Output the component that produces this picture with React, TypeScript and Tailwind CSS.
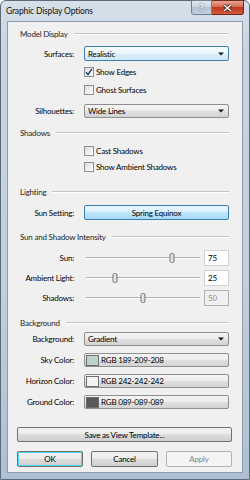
import React from "react";

const FONT = "font-['Lato',sans-serif]";

function Header({ text }: { text: string }) {
  return (
    <div className="flex h-[12px] items-center">
      <span className="whitespace-nowrap text-[#1e1e1e]">{text}</span>
      <div className="ml-[6px] h-[2px] flex-1 border-b border-t border-b-white border-t-[#c4c4c4]" />
    </div>
  );
}

function Row({ label, children, mt, h }: { label: string; children: React.ReactNode; mt: string; h: string }) {
  return (
    <div className={`flex items-center ${mt} ${h}`}>
      <div className="w-[54px] whitespace-nowrap text-right">{label}</div>
      <div className="ml-[10px] h-full flex-1">{children}</div>
    </div>
  );
}

function Arrow() {
  return (
    <svg width="6" height="4" viewBox="0 0 6 4">
      <path d="M0 0.5H6L3 3.5Z" fill="#1a1a1a" />
    </svg>
  );
}

function Combo({ value, focused }: { value: string; focused?: boolean }) {
  return (
    <div
      className={`flex h-full items-center justify-between rounded-[2px] border pl-[3px] pr-[4px] ${
        focused
          ? "border-[#3c7fb1] bg-[linear-gradient(#f6fbfe_0%,#eaf5fc_50%,#dbeef9_50%,#cfe8f7_100%)]"
          : "border-[#8e8f8f] bg-[linear-gradient(#f4f4f4_0%,#ececec_50%,#e0e0e0_50%,#d3d3d3_100%)]"
      }`}
    >
      <span className="whitespace-nowrap">{value}</span>
      <Arrow />
    </div>
  );
}

function Check({ label, checked, mt }: { label: string; checked?: boolean; mt: string }) {
  return (
    <div className={`flex h-[12px] items-center ${mt}`}>
      <div className="w-[64px]" />
      <div className="flex h-[10px] w-[10px] items-center justify-center border border-[#8e8f8f] bg-[linear-gradient(135deg,#dcdcdc,#ffffff)]">
        {checked && (
          <svg width="8" height="8" viewBox="0 0 8 8">
            <path d="M1 4.2L3 6.5L7 0.8" fill="none" stroke="#2a3f7a" strokeWidth="1.4" />
          </svg>
        )}
      </div>
      <span className="ml-[2px] whitespace-nowrap">{label}</span>
    </div>
  );
}

function Slider({ pct, value, disabled }: { pct: number; value: string; disabled?: boolean }) {
  return (
    <div className="flex h-full items-center">
      <div className="relative ml-[2px] h-full w-[114px]">
        <div className="absolute left-0 right-0 top-[7px] h-[2px] border-b border-t border-b-white border-t-[#b4b4b4]" />
        <div
          className="absolute top-[3px] h-[10px] w-[5px] -translate-x-1/2 rounded-[2px] border border-[#707070] bg-[linear-gradient(90deg,#f2f2f2,#d4d4d4)]"
          style={{ left: `${pct}%` }}
        />
      </div>
      <div
        className={`ml-[4px] flex h-full w-[25px] items-center border pl-[3px] ${
          disabled ? "border-[#adb2b5] bg-[#f0f0f0] text-[#8d8d8d]" : "border-[#cfd3d9] bg-white"
        }`}
      >
        {value}
      </div>
    </div>
  );
}

function ColorBtn({ color, text }: { color: string; text: string }) {
  return (
    <div className="flex h-full items-center rounded-[2px] border border-[#8e8f8f] bg-[linear-gradient(#f4f4f4_0%,#ececec_50%,#e0e0e0_50%,#d3d3d3_100%)] pl-[1px]">
      <div className="h-[11px] w-[13px] border border-[#6c6c6c]" style={{ backgroundColor: color }} />
      <span className="ml-[2px] whitespace-nowrap">{text}</span>
    </div>
  );
}

const grayBtn =
  "flex items-center justify-center rounded-[2px] border border-[#707070] bg-[linear-gradient(#f2f2f2_0%,#ebebeb_50%,#dddddd_50%,#cfcfcf_100%)]";

export default function App() {
  return (
    <div className={`${FONT} h-[480px] w-[250px] bg-white text-[8px] leading-none tracking-[-0.2px] text-[#000]`}>
      <div className="flex h-[480px] w-[250px] flex-col rounded-t-[6px] border border-[#5d6b79] bg-[linear-gradient(180deg,#d6e0ea_0%,#c8d4e0_10%,#c2cfdc_60%,#adc0d4_100%)]">
        {/* title bar */}
        <div className="relative flex h-[20px] items-center pl-[5px]">
          <span className="text-[8.5px] tracking-[-0.15px] text-[#111]">Graphic Display Options</span>
          <div className="absolute right-[5px] top-[-1px] flex h-[15px]">
            <div className="flex w-[21px] items-center justify-center rounded-bl-[3px] border border-[#6f7f90] bg-[linear-gradient(#dfe7ef_0%,#c8d4e0_50%,#b4c4d4_50%,#bfd0e0_100%)] text-[9px] font-bold text-white [text-shadow:0_0_2px_#334]">
              ?
            </div>
            <div className="flex w-[32px] items-center justify-center rounded-br-[3px] border border-l-0 border-[#6b2a22] bg-[linear-gradient(#e8a493_0%,#d36b54_45%,#c0391f_50%,#d5583a_100%)]">
              <svg width="9" height="8" viewBox="0 0 9 8">
                <path d="M1 1L8 7M8 1L1 7" stroke="#4a1a12" strokeWidth="3" />
                <path d="M1 1L8 7M8 1L1 7" stroke="#ffffff" strokeWidth="1.6" />
              </svg>
            </div>
          </div>
        </div>
        {/* client */}
        <div className="mx-[6px] mb-[6px] flex flex-1 flex-col border border-[#8d9bab] bg-[#f0f0f0] pl-[9px] pr-[10px] pt-[6px]">
          <div className="flex flex-col px-[3px]">
            <Header text="Model Display" />
            <Row label="Surfaces:" mt="mt-[6px]" h="h-[15px]">
              <Combo value="Realistic" focused />
            </Row>
            <Check label="Show Edges" checked mt="mt-[5px]" />
            <Check label="Ghost Surfaces" mt="mt-[6px]" />
            <Row label="Silhouettes:" mt="mt-[8px]" h="h-[14px]">
              <Combo value="Wide Lines" />
            </Row>
            <div className="mt-[9px]">
              <Header text="Shadows" />
            </div>
            <Check label="Cast Shadows" mt="mt-[6px]" />
            <Check label="Show Ambient Shadows" mt="mt-[4px]" />
            <div className="mt-[13px]">
              <Header text="Lighting" />
            </div>
            <Row label="Sun Setting:" mt="mt-[7px]" h="h-[15px]">
              <div className="flex h-full items-center justify-center rounded-[2px] border border-[#3c7fb1] bg-[linear-gradient(#eaf6fd_0%,#d9f0fc_50%,#bee6fd_50%,#a7d9f5_100%)]">
                Spring Equinox
              </div>
            </Row>
            <div className="mt-[11px]">
              <Header text="Sun and Shadow Intensity" />
            </div>
            <Row label="Sun:" mt="mt-[7px]" h="h-[16px]">
              <Slider pct={75} value="75" />
            </Row>
            <Row label="Ambient Light:" mt="mt-[4px]" h="h-[16px]">
              <Slider pct={25} value="25" />
            </Row>
            <Row label="Shadows:" mt="mt-[4px]" h="h-[16px]">
              <Slider pct={50} value="50" disabled />
            </Row>
            <div className="mt-[11px]">
              <Header text="Background" />
            </div>
            <Row label="Background:" mt="mt-[3px]" h="h-[14px]">
              <Combo value="Gradient" />
            </Row>
            <Row label="Sky Color:" mt="mt-[7px]" h="h-[14px]">
              <ColorBtn color="rgb(189,209,208)" text="RGB 189-209-208" />
            </Row>
            <Row label="Horizon Color:" mt="mt-[7px]" h="h-[14px]">
              <ColorBtn color="rgb(242,242,242)" text="RGB 242-242-242" />
            </Row>
            <Row label="Ground Color:" mt="mt-[7px]" h="h-[14px]">
              <ColorBtn color="rgb(89,89,89)" text="RGB 089-089-089" />
            </Row>
          </div>
          <div className={`${grayBtn} mt-[18px] h-[15px]`}>Save as View Template...</div>
          <div className="mt-[9px] flex h-[16px] gap-[8px]">
            <div className={`${grayBtn} w-[66px] border-[#3c7fb1] shadow-[inset_0_0_0_1px_#48d8fb]`}>OK</div>
            <div className={`${grayBtn} w-[67px]`}>Cancel</div>
            <div className="flex w-[66px] items-center justify-center rounded-[2px] border border-[#adb2b5] bg-[#f4f4f4] text-[#838383]">
              Apply
            </div>
          </div>
        </div>
      </div>
    </div>
  );
}
